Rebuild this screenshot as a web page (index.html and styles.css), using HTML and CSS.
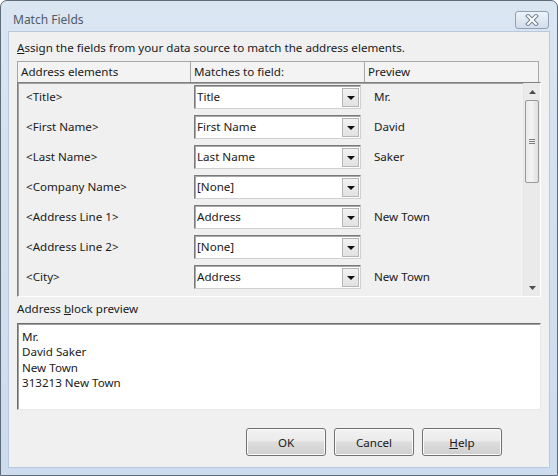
FILE: index.html
```html
<!DOCTYPE html>
<html>
<head>
<meta charset="utf-8">
<link rel="stylesheet" href="styles.css">
</head>
<body>
<div class="window">
  <div class="titlebar">
    <span class="title">Match Fields</span>
    <button class="close" aria-label="Close">
      <svg width="18" height="12" viewBox="0 0 18 12">
        <path d="M5 2 L13 10 M13 2 L5 10" stroke="#6f7f93" stroke-width="4" stroke-linecap="square" fill="none"/>
        <path d="M5 2 L13 10 M13 2 L5 10" stroke="#ffffff" stroke-width="2" stroke-linecap="square" fill="none"/>
      </svg>
    </button>
  </div>
  <div class="client">
    <div class="intro"><u>A</u>ssign the fields from your data source to match the address elements.</div>
    <div class="table">
      <div class="thead">
        <div class="th c1">Address elements</div>
        <div class="th c2">Matches to field:</div>
        <div class="th c3">Preview</div>
      </div>
      <div class="list">
        <div class="rows">
          <div class="row"><div class="lbl">&lt;Title&gt;</div><div class="combo"><span class="val">Title</span><span class="arrow"></span></div><div class="pv">Mr.</div></div>
          <div class="row"><div class="lbl">&lt;First Name&gt;</div><div class="combo"><span class="val">First Name</span><span class="arrow"></span></div><div class="pv">David</div></div>
          <div class="row"><div class="lbl">&lt;Last Name&gt;</div><div class="combo"><span class="val">Last Name</span><span class="arrow"></span></div><div class="pv">Saker</div></div>
          <div class="row"><div class="lbl">&lt;Company Name&gt;</div><div class="combo"><span class="val">[None]</span><span class="arrow"></span></div><div class="pv"></div></div>
          <div class="row"><div class="lbl">&lt;Address Line 1&gt;</div><div class="combo"><span class="val">Address</span><span class="arrow"></span></div><div class="pv">New Town</div></div>
          <div class="row"><div class="lbl">&lt;Address Line 2&gt;</div><div class="combo"><span class="val">[None]</span><span class="arrow"></span></div><div class="pv"></div></div>
          <div class="row"><div class="lbl">&lt;City&gt;</div><div class="combo"><span class="val">Address</span><span class="arrow"></span></div><div class="pv">New Town</div></div>
        </div>
        <div class="scrollbar">
          <div class="sb-btn"><svg width="7" height="4" viewBox="0 0 7 4"><path d="M0 4 L3.5 0 L7 4 Z" fill="#4d4d4d"/></svg></div>
          <div class="thumb"><span class="grip"></span></div>
          <div class="track"></div>
          <div class="sb-btn"><svg width="7" height="4" viewBox="0 0 7 4"><path d="M0 0 L3.5 4 L7 0 Z" fill="#4d4d4d"/></svg></div>
        </div>
      </div>
    </div>
    <div class="section-label">Address <u>b</u>lock preview</div>
    <div class="preview">
      <div class="pline">Mr.</div>
      <div class="pline">David Saker</div>
      <div class="pline">New Town</div>
      <div class="pline">313213 New Town</div>
    </div>
    <div class="buttons">
      <button class="btn">OK</button>
      <button class="btn">Cancel</button>
      <button class="btn"><u>H</u>elp</button>
    </div>
  </div>
</div>
</body>
</html>
```

FILE: styles.css
```css
* { box-sizing: border-box; }
html, body { margin: 0; padding: 0; }
body {
  width: 558px;
  height: 476px;
  overflow: hidden;
  font-family: "Noto Sans", "Open Sans", sans-serif;
  font-size: 11.6px;
  color: #1a1a1a;
}
.window {
  width: 558px;
  height: 476px;
  background: linear-gradient(180deg, #dbe6f3 0%, #d3e0ef 40%, #cddcee 100%);
  border: 1px solid #5d6a78;
  border-radius: 7px 7px 0 0;
  display: flex;
  flex-direction: column;
  padding: 0 7px 7px 7px;
}
.titlebar {
  height: 30px;
  display: flex;
  align-items: center;
  justify-content: space-between;
  padding: 0 1px 0 5px;
}
.title {
  color: #4f5a66;
  font-size: 12px;
  margin-top: 6px;
}
.close {
  width: 34px;
  height: 18px;
  margin-top: 8px;
  border: 1px solid #8fa0b5;
  border-radius: 3px;
  background: linear-gradient(180deg, #eef3f9 0%, #dfe7f1 50%, #d3deeb 100%);
  display: flex;
  align-items: center;
  justify-content: center;
  padding: 0;
}
.client {
  flex: 1;
  background: #f0f0f0;
  border: 1px solid #b9c9dc;
  padding: 8px 8px 0 8px;
  display: flex;
  flex-direction: column;
}
.intro {
  line-height: 15px;
  height: 15px;
  margin-bottom: 6px;
}
.table {
  height: 236px;
  display: flex;
  flex-direction: column;
}
.thead {
  display: flex;
  height: 21px;
  background: #f3f3f3;
  border: 1px solid #a8a8a8;
  border-bottom: none;
  margin-right: 2px;
}
.th {
  line-height: 19px;
  padding-left: 3px;
  border-right: 1px solid #a8a8a8;
  color: #1a1a1a;
}
.th.c1 { width: 173px; }
.th.c2 { width: 174px; }
.th.c3 { flex: 1; border-right: none; }
.list {
  flex: 1;
  display: flex;
  border-top: 1px solid #808080;
  border-left: 1px solid #808080;
  border-bottom: 1px solid #ffffff;
  border-right: 1px solid #ffffff;
  box-shadow: inset 1px 1px 0 #a0a0a0;
  background: #f0f0f0;
}
.rows {
  flex: 1;
  padding-top: 1px;
}
.row {
  height: 30px;
  display: flex;
  align-items: flex-start;
}
.lbl {
  width: 176px;
  padding-left: 8px;
  margin-top: 1px;
  line-height: 24px;
}
.combo {
  width: 167px;
  height: 24px;
  margin-top: 1px;
  background: #ffffff;
  border: 1px solid;
  border-color: #7a7a7a #d0d0d0 #d0d0d0 #7a7a7a;
  box-shadow: inset 1px 1px 0 #a9a9a9;
  display: flex;
  align-items: stretch;
  justify-content: space-between;
}
.val {
  padding-left: 2px;
  line-height: 21px;
}
.arrow {
  width: 17px;
  margin: 2px 1px 1px 0;
  background: linear-gradient(180deg, #f2f2f2 0%, #e2e2e2 100%);
  border: 1px solid #b5b5b5;
  display: flex;
  align-items: center;
  justify-content: center;
}
.arrow::after {
  content: "";
  width: 0;
  height: 0;
  border-left: 4px solid transparent;
  border-right: 4px solid transparent;
  border-top: 4px solid #111;
}
.pv {
  padding-left: 13px;
  margin-top: 1px;
  line-height: 24px;
}
.scrollbar {
  width: 17px;
  display: flex;
  flex-direction: column;
  background: #eaeaea;
  border-left: 1px solid #e4e4e4;
}
.sb-btn {
  height: 17px;
  display: flex;
  align-items: center;
  justify-content: center;
}
.thumb {
  height: 83px;
  margin: 0 1px;
  border: 1px solid #9a9a9a;
  border-radius: 2px;
  background: linear-gradient(90deg, #e9e9e9 0%, #f4f4f4 45%, #dedede 100%);
  display: flex;
  align-items: center;
  justify-content: center;
}
.grip {
  width: 6px;
  height: 5px;
  border-top: 1px solid #7d7d7d;
  border-bottom: 1px solid #7d7d7d;
  position: relative;
}
.grip::after {
  content: "";
  position: absolute;
  left: 0; right: 0; top: 1px;
  border-top: 1px solid #7d7d7d;
}
.track { flex: 1; }
.section-label {
  margin-top: 4px;
  line-height: 15px;
  height: 15px;
  margin-bottom: 7px;
}
.preview {
  height: 87px;
  background: #ffffff;
  border: 1px solid;
  border-color: #6e6e6e #e8e8e8 #e8e8e8 #6e6e6e;
  box-shadow: inset 1px 1px 0 #a0a0a0;
  padding: 5px 0 0 4px;
}
.pline {
  height: 15.3px;
  line-height: 15px;
}
.buttons {
  display: flex;
  justify-content: flex-end;
  gap: 8px;
  padding-right: 39px;
  margin-top: 18px;
}
.btn {
  width: 80px;
  height: 28px;
  font-family: "Noto Sans", "Open Sans", sans-serif;
  font-size: 11.6px;
  color: #1a1a1a;
  border: 1px solid #707070;
  border-radius: 3px;
  background: linear-gradient(180deg, #f2f2f2 0%, #ebebeb 45%, #dddddd 50%, #cfcfcf 100%);
  box-shadow: inset 0 0 0 1px #fbfbfb;
  padding: 0;
}
```
